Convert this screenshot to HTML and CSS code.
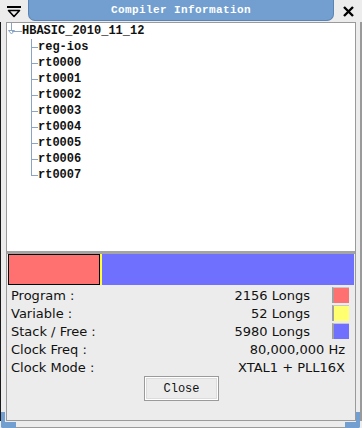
FILE: index.html
```html
<!DOCTYPE html>
<html lang="en">

<head>
  <meta charset="UTF-8">
  <title>Compiler Information</title>
  <link rel="stylesheet" href="styles.css">
</head>

<body>
  <div class="window">
    <header class="titlebar">
      <div class="menu-btn">
        <svg width="14" height="12" viewBox="0 0 14 12">
          <rect x="0" y="0" width="14" height="2" fill="#000"/>
          <path d="M1.5 4.5 H12.5 L7 10.5 Z" fill="none" stroke="#000" stroke-width="1.6" stroke-linejoin="round"/>
        </svg>
      </div>
      <div class="title">Compiler Information</div>
      <div class="close-btn">
        <svg width="11" height="11" viewBox="0 0 11 11">
          <path d="M1 1 L10 10 M10 1 L1 10" stroke="#000" stroke-width="2.4"/>
        </svg>
      </div>
    </header>

    <div class="frame">
      <div class="content">
        <div class="tree">
          <div class="root">
            <svg class="root-icon" width="15" height="16" viewBox="0 0 15 16">
              <path d="M4.5 0 V7" stroke="#8aa4c4" stroke-width="1"/>
              <path d="M1.5 7.5 H7.5 L4.5 11 Z" fill="#fff" stroke="#8aa4c4" stroke-width="1"/>
              <path d="M5 8.5 H15" stroke="#8aa4c4" stroke-width="1"/>
            </svg>
            HBASIC_2010_11_12
          </div>
          <ul class="children">
            <li>reg-ios</li>
            <li>rt0000</li>
            <li>rt0001</li>
            <li>rt0002</li>
            <li>rt0003</li>
            <li>rt0004</li>
            <li>rt0005</li>
            <li>rt0006</li>
            <li>rt0007</li>
          </ul>
        </div>

        <div class="usage-bar">
          <div class="seg seg-program" style="width: 92px"></div>
          <div class="seg seg-variable" style="width: 2px"></div>
          <div class="seg seg-free"></div>
        </div>

        <div class="info">
          <div class="stats">
            <span class="label">Program :</span>
            <span class="value">2156 Longs</span>
            <span class="swatch red"></span>

            <span class="label">Variable :</span>
            <span class="value">52 Longs</span>
            <span class="swatch yellow"></span>

            <span class="label">Stack / Free :</span>
            <span class="value">5980 Longs</span>
            <span class="swatch blue"></span>

            <span class="label">Clock Freq :</span>
            <span class="value wide">80,000,000 Hz</span>

            <span class="label">Clock Mode :</span>
            <span class="value wide">XTAL1 + PLL16X</span>
          </div>
          <div class="actions">
            <button class="btn">Close</button>
          </div>
        </div>
      </div>
    </div>

    <footer class="frame-bottom">
      <div class="corner left"></div>
      <div class="edge"></div>
      <div class="corner right"></div>
    </footer>
  </div>
</body>

</html>
```

FILE: styles.css
```css
body {
  margin: 0;
  overflow: hidden;
  background-color: #ececec;
  font-family: "DejaVu Sans", sans-serif;
}

.window {
  width: 362px;
  height: 428px;
  display: flex;
  flex-direction: column;
  background: #ececec;
}

/* title bar */
.titlebar {
  display: flex;
  height: 22px;
  flex-shrink: 0;
}

.menu-btn {
  width: 28px;
  display: flex;
  justify-content: center;
  padding-top: 6px;
  box-sizing: border-box;
}

.title {
  width: 306px;
  height: 21px;
  background: #729fcf;
  border: 1px solid #5a84b5;
  border-top: none;
  border-radius: 0 0 7px 7px;
  box-sizing: border-box;
  color: #fff;
  font-family: "Liberation Mono", monospace;
  font-weight: bold;
  font-size: 11px;
  letter-spacing: 0.4px;
  text-align: center;
  line-height: 20px;
}

.close-btn {
  flex: 1;
  display: flex;
  justify-content: center;
  padding-top: 6px;
  box-sizing: border-box;
}

/* window body */
.frame {
  flex: 1;
  display: flex;
  flex-direction: column;
  border-left: 1px solid #1a1a1a;
  border-right: 2px solid #9a9a9a;
  padding: 0 4px 0 5px;
}

.content {
  flex: 1;
  display: flex;
  flex-direction: column;
  border: 1px solid #9a9a9a;
}

.tree {
  height: 228px;
  background: #fff;
  border-bottom: 3px solid #a4a4a4;
  font-family: "Liberation Mono", monospace;
  font-weight: bold;
  font-size: 12px;
  color: #111;
}

.root {
  display: flex;
  align-items: center;
  height: 16px;
  line-height: 16px;
}

.children {
  list-style: none;
  margin: 0 0 0 24px;
  padding: 0;
}

.children li {
  position: relative;
  height: 16px;
  line-height: 16px;
  padding-left: 7px;
}

.children li::before {
  content: '';
  position: absolute;
  left: 0;
  top: 0;
  width: 6px;
  height: 8px;
  border-left: 1px solid #8aa4c4;
  border-bottom: 1px solid #8aa4c4;
}

.children li::after {
  content: '';
  position: absolute;
  left: 0;
  top: 8px;
  bottom: 0;
  border-left: 1px solid #8aa4c4;
}

.children li:last-child::after {
  display: none;
}

.usage-bar {
  display: flex;
  height: 31px;
  margin: 0 1px;
}

.seg {
  height: 100%;
  box-sizing: border-box;
}

.seg-program {
  background: #ff7070;
  border: 1px solid #000;
}

.seg-variable {
  background: #ffff40;
}

.seg-free {
  flex: 1;
  background: #7070ff;
}

.info {
  display: flex;
  flex-direction: column;
  padding: 1px 6px 0 4px;
  font-size: 13px;
  color: #111;
}

.stats {
  display: grid;
  grid-template-columns: 1fr auto 17px;
  grid-auto-rows: 18px;
  column-gap: 22px;
  align-items: center;
}

.label {
  grid-column: 1;
}

.value {
  text-align: right;
}

.value.wide {
  grid-column: 2 / 4;
  padding-right: 4px;
}

.swatch {
  width: 17px;
  height: 16px;
  border-left: 2px solid #a0a0a0;
  border-top: 1px solid #c8c8c8;
  box-sizing: border-box;
}

.swatch.red {
  background: #ff7070;
}

.swatch.yellow {
  background: #ffff70;
}

.swatch.blue {
  background: #7070ff;
}

.actions {
  display: flex;
  justify-content: center;
}

.btn {
  width: 75px;
  height: 25px;
  margin-left: 3px;
  background: #ececec;
  border: 1px solid #9a9a9a;
  box-shadow: inset 0 0 0 1px #fff, inset 0 0 0 2px #dcdcdc;
  font-family: "Liberation Mono", monospace;
  font-size: 12px;
  color: #111;
  padding: 0;
}

/* bottom frame with blue resize corners */
.frame-bottom {
  display: flex;
  height: 7px;
  flex-shrink: 0;
  padding: 0 2px 0 1px;
}

.edge {
  flex: 1;
  border-bottom: 1px solid #9a9a9a;
}

.corner {
  width: 15px;
  height: 16px;
  margin-top: -9px;
  box-sizing: border-box;
  border-bottom: 6px solid #729fcf;
}

.corner.left {
  border-left: 4px solid #729fcf;
  border-radius: 0 0 0 2px;
}

.corner.right {
  border-right: 4px solid #729fcf;
  border-radius: 0 0 2px 0;
}
```
